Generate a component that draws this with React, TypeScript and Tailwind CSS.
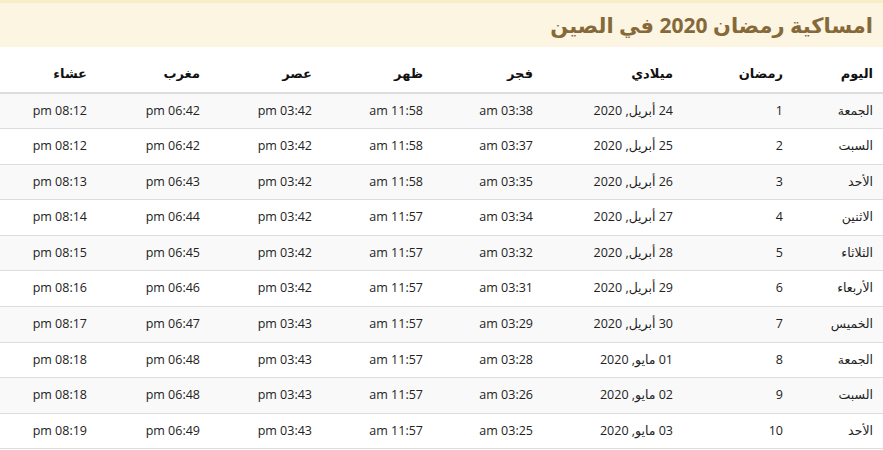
import React from 'react';

const rows = [
  ['الجمعة', '1', '24 أبريل, 2020', 'am 03:38', 'am 11:58', 'pm 03:42', 'pm 06:42', 'pm 08:12'],
  ['السبت', '2', '25 أبريل, 2020', 'am 03:37', 'am 11:58', 'pm 03:42', 'pm 06:42', 'pm 08:12'],
  ['الأحد', '3', '26 أبريل, 2020', 'am 03:35', 'am 11:58', 'pm 03:42', 'pm 06:43', 'pm 08:13'],
  ['الاثنين', '4', '27 أبريل, 2020', 'am 03:34', 'am 11:57', 'pm 03:42', 'pm 06:44', 'pm 08:14'],
  ['الثلاثاء', '5', '28 أبريل, 2020', 'am 03:32', 'am 11:57', 'pm 03:42', 'pm 06:45', 'pm 08:15'],
  ['الأربعاء', '6', '29 أبريل, 2020', 'am 03:31', 'am 11:57', 'pm 03:42', 'pm 06:46', 'pm 08:16'],
  ['الخميس', '7', '30 أبريل, 2020', 'am 03:29', 'am 11:57', 'pm 03:43', 'pm 06:47', 'pm 08:17'],
  ['الجمعة', '8', '01 مايو, 2020', 'am 03:28', 'am 11:57', 'pm 03:43', 'pm 06:48', 'pm 08:18'],
  ['السبت', '9', '02 مايو, 2020', 'am 03:26', 'am 11:57', 'pm 03:43', 'pm 06:48', 'pm 08:18'],
  ['الأحد', '10', '03 مايو, 2020', 'am 03:25', 'am 11:57', 'pm 03:43', 'pm 06:49', 'pm 08:19'],
];

const headers = ['اليوم', 'رمضان', 'ميلادي', 'فجر', 'ظهر', 'عصر', 'مغرب', 'عشاء'];
const widths = ['w-[90px]', 'w-[110px]', 'w-[140px]', 'w-[110px]', 'w-[111px]', 'w-[112px]', 'w-[113px]', 'w-[97px]'];

export default function App() {
  return (
    <div dir="rtl" className="w-[883px] h-[450px] overflow-hidden bg-white font-['Open_Sans','DejaVu_Sans',sans-serif] text-[#222]">
      {/* عنوان الصفحة */}
      <div className="h-[47px] bg-[#fcf5e2] border-t-[3px] border-[#f8ecc9] flex items-center pr-[10px]">
        <h1 className="text-[21px] font-bold text-[#86693a] leading-none">امساكية رمضان 2020 في الصين</h1>
      </div>

      <table className="w-full border-collapse table-fixed text-[12.5px]">
        <thead>
          <tr className="h-[46px] border-b-2 border-[#dddddd]">
            {headers.map((h, i) => (
              <th key={i} className={`${widths[i]} text-right font-bold text-[13px] pr-[10px] pt-[8px] text-[#111]`}>{h}</th>
            ))}
          </tr>
        </thead>
        <tbody>
          {rows.map((r, i) => (
            <tr key={i} className={`h-[35.6px] border-b border-[#dddddd] ${i % 2 === 0 ? 'bg-[#f9f9f9]' : 'bg-white'}`}>
              {r.map((c, j) => (
                <td key={j} className="text-right pr-[10px] whitespace-nowrap">{c}</td>
              ))}
            </tr>
          ))}
        </tbody>
      </table>
    </div>
  );
}
